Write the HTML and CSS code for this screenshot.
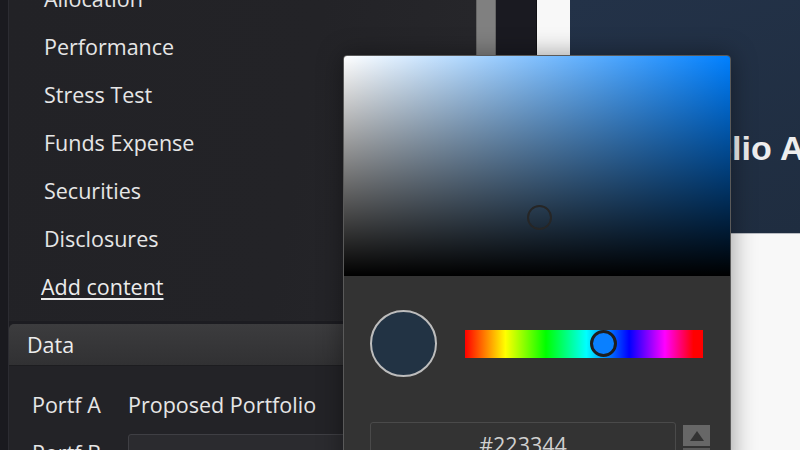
FILE: index.html
```html
<!DOCTYPE html>
<html lang="en">
<head>
<meta charset="utf-8">
<title>Report builder</title>
<link rel="stylesheet" href="styles.css">
</head>
<body>
<div class="app">
  <div class="rail"></div>
  <aside class="sidebar">
    <div class="contents">
      <ul class="content-list">
        <li>Allocation</li>
        <li>Performance</li>
        <li>Stress Test</li>
        <li>Funds Expense</li>
        <li>Securities</li>
        <li>Disclosures</li>
      </ul>
      <a class="add-link" href="#">Add content</a>
    </div>
    <section class="data">
      <div class="data-head">Data</div>
      <div class="data-body">
        <div class="row"><span class="label">Portf A</span><span class="value">Proposed Portfolio</span></div>
        <div class="row row-field"><span class="label">Portf B</span><span class="field"></span></div>
      </div>
    </section>
  </aside>
  <div class="scrollbar"><div class="thumb"></div></div>
  <div class="gutter"></div>
  <main class="page">
    <header class="page-head"><h1>Portfolio Analysis</h1></header>
  </main>

  <div class="picker">
    <div class="sv-area"><span class="sv-marker"></span></div>
    <div class="picker-body">
      <div class="picker-row">
        <span class="swatch"></span>
        <div class="hue-bar"><span class="hue-knob"></span></div>
      </div>
      <div class="hex-row">
        <div class="hex-input">#223344</div>
        <div class="spinner">
          <span class="spin-up"><span class="tri-up"></span></span>
          <span class="spin-down"></span>
        </div>
      </div>
    </div>
  </div>
</div>
</body>
</html>
```

FILE: styles.css
```css
* { box-sizing: border-box; }

html, body {
  margin: 0;
  padding: 0;
  width: 800px;
  height: 450px;
  overflow: hidden;
  background: #1b1b21;
  font-family: "Open Sans", "Liberation Sans", sans-serif;
  color: #e6e6e6;
}

.app {
  position: relative;
  display: flex;
  width: 800px;
  height: 450px;
  overflow: hidden;
}

.rail {
  width: 9px;
  flex: none;
  background: #1a1a1f;
  border-right: 1px solid #2c2c32;
}

.sidebar {
  width: 467px;
  flex: none;
  display: flex;
  flex-direction: column;
  background: #1c1c21;
}

.contents {
  height: 321px;
  flex: none;
  overflow: hidden;
  background: linear-gradient(100deg, #222226 0%, #232327 60%, #27272b 100%);
  font-size: 21.5px;
}

.content-list {
  list-style: none;
  margin: -25px 0 0 0;
  padding: 0 0 0 35px;
}

.content-list li {
  line-height: 48px;
  height: 48px;
  white-space: nowrap;
}

.add-link {
  display: block;
  padding-left: 32px;
  line-height: 48px;
  color: #ececec;
  text-decoration: underline;
  text-decoration-thickness: 1.5px;
  text-underline-offset: 3px;
}

.data {
  margin-top: 3px;
  flex: 1;
  display: flex;
  flex-direction: column;
  font-size: 21.5px;
}

.data-head {
  height: 42px;
  line-height: 41px;
  padding-left: 18px;
  background: linear-gradient(#3c3c3e, #313133);
  border-radius: 5px 0 0 0;
  border-bottom: 1px solid #1d1d20;
  color: #ececec;
}

.data-body {
  flex: 1;
  background: #232327;
  padding: 18px 0 0 23px;
}

.row {
  display: grid;
  grid-template-columns: 96px 1fr;
  align-items: center;
  height: 40px;
  white-space: nowrap;
}

.row-field {
  margin-top: 10px;
  height: 36px;
}

.field {
  display: block;
  height: 36px;
  background: #2b2b2f;
  border: 1px solid #3f3f44;
  border-radius: 3px 0 0 0;
}

.scrollbar {
  width: 20px;
  flex: none;
  background: #1c1c22;
}

.thumb {
  height: 200px;
  background: #808080;
  border-left: 1px solid #666;
  border-right: 1px solid #666;
}

.gutter {
  width: 41px;
  flex: none;
  background: #1a1a21;
  border-right: 1px solid #101014;
}

.page {
  flex: 1;
  background: #f8f8f8;
  padding-left: 33px;
  overflow: hidden;
}

.page-head {
  height: 234px;
  background: linear-gradient(160deg, #233248, #1f2d40);
  border-bottom: 1px solid #b9bcc2;
  padding: 131px 0 0 62px;
  white-space: nowrap;
  overflow: hidden;
}

.page-head h1 {
  margin: 0;
  font-family: "Liberation Sans", Arial, sans-serif;
  font-weight: bold;
  font-size: 34px;
  line-height: 34px;
  color: #eeeeee;
}

/* Colour picker popover */
.picker {
  position: absolute;
  left: 343px;
  top: 55px;
  width: 388px;
  height: 420px;
  background: #333333;
  border: 1px solid #5a5a5a;
  border-radius: 4px 4px 0 0;
  box-shadow: 0 0 26px rgba(0, 0, 0, 0.4);
  overflow: hidden;
}

.sv-area {
  position: relative;
  height: 220px;
  background:
    linear-gradient(to top, #000, rgba(0, 0, 0, 0)),
    linear-gradient(to right, #fff, #0080ff);
}

.sv-marker {
  position: absolute;
  left: 195px;
  top: 161px;
  width: 25px;
  height: 25px;
  margin: -12.5px 0 0 -12.5px;
  border: 2.5px solid #262626;
  border-radius: 50%;
}

.picker-body {
  padding: 34px 27px 0 26px;
}

.picker-row {
  display: flex;
  align-items: center;
  gap: 28px;
}

.swatch {
  width: 67px;
  height: 67px;
  flex: none;
  border-radius: 50%;
  background: #223344;
  border: 2px solid #bdbdbd;
}

.hue-bar {
  position: relative;
  flex: 1;
  height: 28px;
  background: linear-gradient(to right,
    #ff0000 0%, #ffff00 17%, #00ff00 34%, #00ffff 51%,
    #0000ff 69%, #ff00ff 84%, #ff0000 96%, #ff0000 100%);
}

.hue-knob {
  position: absolute;
  left: 58.4%;
  top: 50%;
  width: 27px;
  height: 27px;
  margin: -13.5px 0 0 -13.5px;
  border-radius: 50%;
  background: #0a80ff;
  border: 3px solid #1e1e1e;
}

.hex-row {
  display: flex;
  gap: 7px;
  margin-top: 45px;
  margin-right: -8px;
}

.hex-input {
  width: 306px;
  height: 44px;
  border: 1px solid #4a4a4a;
  border-radius: 3px;
  text-align: center;
  font-size: 21.5px;
  line-height: 43px;
  color: #d0d0d0;
}

.spinner {
  width: 27px;
  margin-top: 3px;
  display: flex;
  flex-direction: column;
}

.spin-up {
  height: 21px;
  background: #676767;
  display: flex;
  align-items: center;
  justify-content: center;
}

.tri-up {
  width: 0;
  height: 0;
  border-left: 7px solid transparent;
  border-right: 7px solid transparent;
  border-bottom: 10px solid #333333;
}

.spin-down {
  height: 21px;
  background: #5a5a5a;
  border-top: 2px solid #333;
}
```
